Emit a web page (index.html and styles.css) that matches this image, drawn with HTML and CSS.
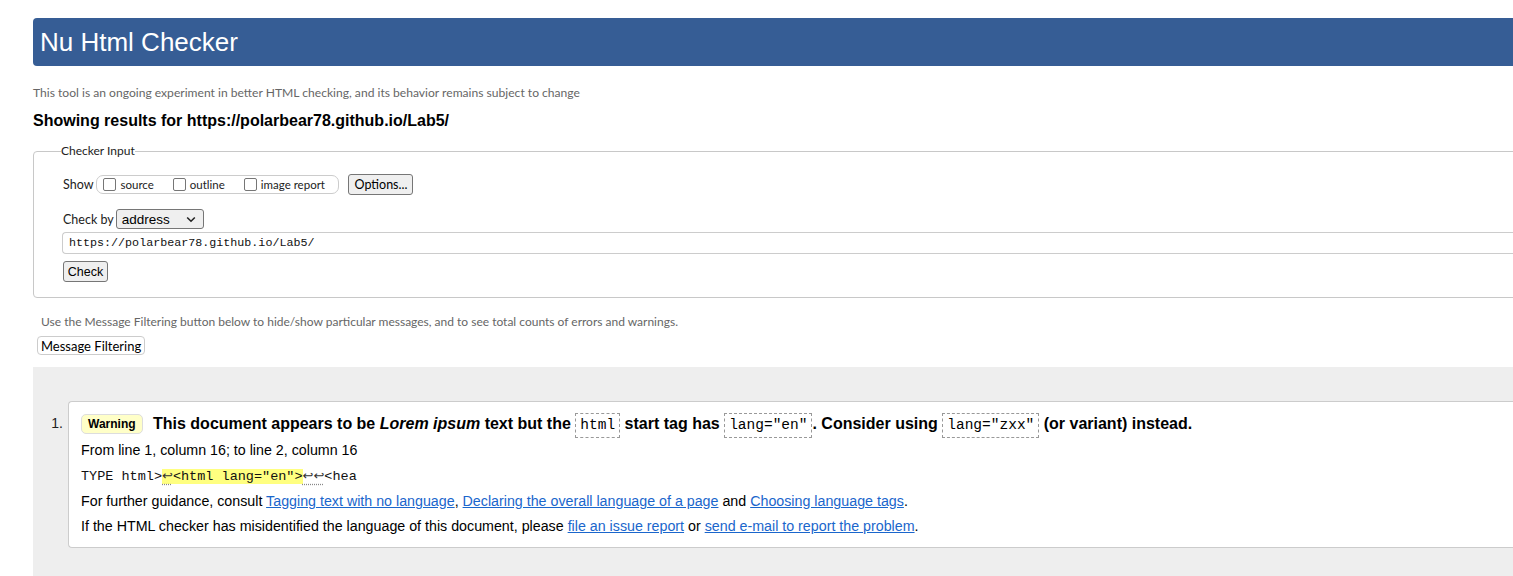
FILE: index.html
```html
<!DOCTYPE html>
<html lang="en">
<head>
<meta charset="utf-8">
<title>Nu Html Checker</title>
<link rel="stylesheet" href="styles.css">
</head>
<body>
<div class="page">
  <h1 class="brand">Nu Html Checker</h1>
  <p class="intro">This tool is an ongoing experiment in better HTML checking, and its behavior remains subject to change</p>
  <h2 class="results-for">Showing results for https://polarbear78.github.io/Lab5/</h2>

  <fieldset class="checker-input">
    <legend class="legend">Checker Input</legend>
    <div class="row row-show">
      <span class="label">Show</span>
      <span class="show-group">
        <label class="opt"><span class="box"></span>source</label>
        <label class="opt"><span class="box"></span>outline</label>
        <label class="opt"><span class="box"></span>image report</label>
      </span>
      <span class="btn btn-options">Options...</span>
    </div>
    <div class="row row-by">
      <span class="label">Check by</span>
      <span class="select">
        <span class="select-text">address</span>
        <svg class="chev" width="10" height="7" viewBox="0 0 10 7"><path d="M1.2 1.5 L5 5.2 L8.8 1.5" fill="none" stroke="#222" stroke-width="1.6"/></svg>
      </span>
    </div>
    <div class="url">https://polarbear78.github.io/Lab5/</div>
    <div class="row row-check">
      <span class="btn btn-check">Check</span>
    </div>
  </fieldset>

  <p class="filter-note">Use the Message Filtering button below to hide/show particular messages, and to see total counts of errors and warnings.</p>
  <span class="btn-filter">Message Filtering</span>

  <div class="results">
    <ol class="messages">
      <li class="msg-item">
        <span class="num">1.</span>
        <div class="msg">
          <p class="msg-title"><span class="badge">Warning</span> This document appears to be <i>Lorem ipsum</i> text but the <code class="c">html</code> start tag has <code class="c">lang="en"</code>. Consider using <code class="c">lang="zxx"</code> (or variant) instead.</p>
          <p class="line">From line 1, column 16; to line 2, column 16</p>
          <p class="line extract">TYPE html&gt;<mark class="hl"><span class="lf">↩</span>&lt;html lang="en"&gt;</mark><span class="lf">↩↩</span>&lt;hea</p>
          <p class="line">For further guidance, consult <a href="#">Tagging text with no language</a>, <a href="#">Declaring the overall language of a page</a> and <a href="#">Choosing language tags</a>.</p>
          <p class="line">If the HTML checker has misidentified the language of this document, please <a href="#">file an issue report</a> or <a href="#">send e-mail to report the problem</a>.</p>
        </div>
      </li>
    </ol>
  </div>
</div>
</body>
</html>
```
FILE: styles.css
```css
html { overflow: hidden; }
body {
  margin: 0;
  font-family: "Liberation Sans", Arial, sans-serif;
  color: #000;
  background: #fff;
}
.page {
  width: 1600px;
  padding: 18px 0 0 33px;
}
.brand {
  margin: 0;
  height: 48px;
  line-height: 49px;
  background: #365d95;
  color: #fff;
  font-weight: normal;
  font-size: 26px;
  padding-left: 7px;
  border-radius: 4px 0 0 4px;
}
.intro {
  margin: 19px 0 0;
  font-family: Lato, "Open Sans", sans-serif;
  font-size: 12.1px;
  line-height: 16px;
  color: #666;
}
.results-for {
  margin: 10px 0 0;
  font-size: 16px;
  line-height: 19px;
  font-weight: bold;
}
.checker-input {
  margin: 13px 0 0;
  padding: 15px 0 15px 29px;
  border: 1px solid #c8c8c8;
  border-radius: 4px;
  min-width: 0;
}
.legend {
  margin-left: -2px;
  padding: 0;
  font-family: Lato, "Open Sans", sans-serif;
  font-size: 12px;
  line-height: 16px;
  color: #222;
}
.row {
  display: flex;
  align-items: center;
}
.label {
  font-family: Lato, "Open Sans", sans-serif;
  font-size: 12.5px;
  color: #222;
}
.row-show { height: 21px; }
.show-group {
  display: flex;
  align-items: center;
  height: 17px;
  margin-left: 3px;
  padding: 0 6px 0 6px;
  border: 1px solid #ccc;
  border-radius: 7px;
  width: 229px;
  gap: 19px;
}
.opt {
  display: flex;
  align-items: center;
  font-family: Lato, "Open Sans", sans-serif;
  font-size: 11.5px;
  color: #222;
}
.box {
  width: 11px;
  height: 11px;
  border: 1px solid #767676;
  border-radius: 2px;
  margin-right: 4px;
  background: #fff;
}
.btn {
  display: inline-flex;
  align-items: center;
  justify-content: center;
  box-sizing: border-box;
  background: #efefef;
  border: 1px solid #767676;
  border-radius: 3px;
  font-family: Lato, "Open Sans", sans-serif;
  font-size: 12.5px;
  color: #000;
}
.btn-options {
  margin-left: 9px;
  width: 65px;
  height: 21px;
}
.row-by {
  margin-top: 14px;
  height: 20px;
}
.select {
  margin-left: 2px;
  box-sizing: border-box;
  width: 88px;
  height: 20px;
  display: flex;
  align-items: center;
  justify-content: space-between;
  padding: 0 7px 0 5px;
  background: #efefef;
  border: 1px solid #767676;
  border-radius: 3px;
}
.select-text {
  font-size: 13.5px;
}
.url {
  margin: 3px 0 0 -1px;
  box-sizing: border-box;
  height: 22px;
  line-height: 20px;
  padding-left: 6px;
  border: 1px solid #ccc;
  border-right: 0;
  border-radius: 4px 0 0 4px;
  font-family: "Liberation Mono", "DejaVu Sans Mono", monospace;
  font-size: 11.7px;
  color: #111;
}
.row-check { margin-top: 7px; }
.btn-check {
  width: 45px;
  height: 21px;
  font-family: "Liberation Sans", Arial, sans-serif;
  font-size: 12.5px;
}
.filter-note {
  margin: 16px 0 0 8px;
  font-family: Lato, "Open Sans", sans-serif;
  font-size: 12px;
  line-height: 16px;
  color: #666;
}
.btn-filter {
  display: inline-flex;
  align-items: center;
  box-sizing: border-box;
  height: 19px;
  margin: 6px 0 0 4px;
  padding: 0 3px;
  border: 1px solid #ccc;
  border-radius: 4px;
  background: #fff;
  font-family: Lato, "Open Sans", sans-serif;
  font-size: 13px;
  color: #000;
}
.results {
  margin-top: 12px;
  background: #eee;
  padding: 34px 0 30px;
}
.messages {
  list-style: none;
  margin: 0;
  padding: 0;
}
.msg-item {
  display: flex;
  align-items: flex-start;
}
.num {
  width: 35px;
  box-sizing: border-box;
  text-align: right;
  padding-right: 5px;
  padding-top: 14px;
  font-size: 14px;
  color: #222;
}
.msg {
  flex: 1;
  background: #fff;
  border: 1px solid #ccc;
  border-right: 0;
  border-radius: 4px 0 0 4px;
  padding: 8px 0 8px 12px;
}
.msg-title {
  margin: 0;
  font-size: 16px;
  font-weight: bold;
  line-height: 28px;
}
.badge {
  display: inline-block;
  box-sizing: border-box;
  height: 20px;
  line-height: 18px;
  padding: 0 6px;
  margin-right: 6px;
  border: 1px solid #ddd;
  border-radius: 5px;
  background: #ffffc8;
  font-size: 12px;
  font-weight: bold;
  vertical-align: 1px;
}
.c {
  display: inline-block;
  line-height: 23px;
  padding: 0 4px;
  border: 1px dashed #999;
  font-family: "Liberation Mono", "DejaVu Sans Mono", monospace;
  font-size: 14.5px;
  font-weight: normal;
}
.line {
  margin: 0;
  font-size: 14.25px;
  line-height: 25px;
}
.extract {
  font-family: "Liberation Mono", "DejaVu Sans Mono", monospace;
  font-size: 13.5px;
  color: #111;
}
.hl {
  background: #ffff80;
  color: inherit;
}
.lf {
  font-family: "DejaVu Sans", sans-serif;
  font-size: 13px;
  color: #333;
  text-decoration: underline dotted #888;
  text-underline-offset: 4px;
}
a {
  color: #1a66cc;
  text-decoration: underline;
}
```
